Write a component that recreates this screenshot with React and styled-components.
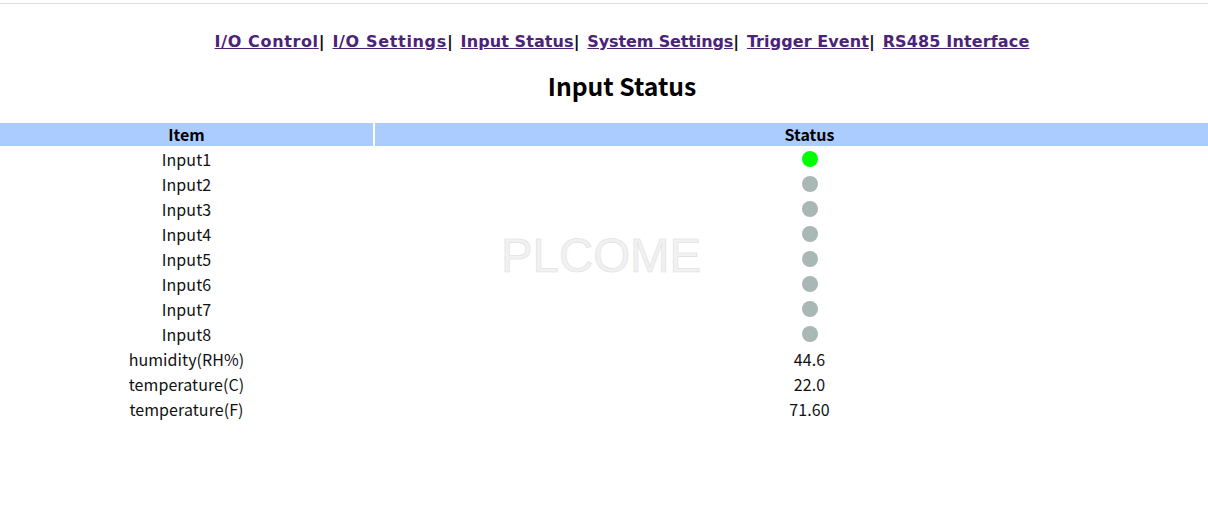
import React from "react";
import styled, { createGlobalStyle } from "styled-components";

const Global = createGlobalStyle`
  html, body { margin: 0; padding: 0; background: #fff; }
  body { font-family: "Noto Sans CJK SC", "Noto Sans", sans-serif; color: #000; }
`;

const Viewport = styled.div`
  position: relative;
  width: 1208px;
  height: 512px;
  overflow: hidden;
`;

const Page = styled.div`
  width: 1244px;
  padding-top: 3px;
`;

const TopRule = styled.hr`
  margin: 0;
  border: 0;
  height: 1px;
  background: #dedede;
`;

const Nav = styled.nav`
  margin-top: 25px;
  height: 26px;
  line-height: 26px;
  text-align: center;
  font-family: "DejaVu Sans", sans-serif;
  font-weight: 700;
  font-size: 16px;
  white-space: nowrap;
`;

const NavLink = styled.a`
  color: #4b2378;
  text-decoration: underline;
  letter-spacing: ${(p) => p.$tracking}px;
`;

const Separator = styled.span`
  margin-right: 2.3px;
  color: #111;
`;

const Title = styled.h1`
  margin: 10px 0 0;
  height: 40px;
  line-height: 40px;
  text-align: center;
  font-size: 24.7px;
  font-weight: 700;
`;

const Table = styled.div`
  margin-top: 18px;
  display: grid;
  grid-template-columns: 373px 1fr;
  column-gap: 2px;
`;

const HeadCell = styled.div`
  height: 23px;
  line-height: 22px;
  background: #aaccff;
  text-align: center;
  font-size: 16px;
  font-weight: 700;
`;

const Cell = styled.div`
  height: 25px;
  line-height: 26px;
  text-align: center;
  font-size: 16px;
  letter-spacing: 0.08px;
  color: #111;
`;

const LampCell = styled.div`
  height: 25px;
  display: flex;
  align-items: flex-start;
  justify-content: center;
  padding-top: 5px;
  box-sizing: border-box;
`;

const Lamp = styled.span`
  width: 16px;
  height: 16px;
  border-radius: 50%;
  background: ${(p) => (p.$on ? "#00ff00" : "#a9b7b5")};
`;

const Watermark = styled.div`
  position: absolute;
  left: 501px;
  top: 229px;
  font-family: "Liberation Sans", sans-serif;
  font-size: 47.4px;
  line-height: 54px;
  color: #f1f1f1;
  -webkit-text-stroke: 0.6px #dedede;
  white-space: nowrap;
  pointer-events: none;
`;

const links = [
  ["I/O Control", 0.64],
  ["I/O Settings", 0.66],
  ["Input Status", 0.09],
  ["System Settings", -0.13],
  ["Trigger Event", 0.08],
  ["RS485 Interface", 0.14],
];
const inputs = [true, false, false, false, false, false, false, false];
const readings = [
  ["humidity(RH%)", "44.6"],
  ["temperature(C)", "22.0"],
  ["temperature(F)", "71.60"],
];

export default function App() {
  return (
    <Viewport>
      <Global />
      <Page>
        <TopRule />
        <Nav>
          {links.map(([label, tracking], i) => (
            <React.Fragment key={label}>
              <NavLink href="#" $tracking={tracking}>{label}</NavLink>
              {i < links.length - 1 ? <Separator>| </Separator> : null}
            </React.Fragment>
          ))}
        </Nav>
        <Title>Input Status</Title>
        <Table>
          <HeadCell>Item</HeadCell>
          <HeadCell>Status</HeadCell>
          {inputs.map((on, i) => (
            <React.Fragment key={i}>
              <Cell>Input{i + 1}</Cell>
              <LampCell><Lamp $on={on} /></LampCell>
            </React.Fragment>
          ))}
          {readings.map(([k, v]) => (
            <React.Fragment key={k}>
              <Cell>{k}</Cell>
              <Cell>{v}</Cell>
            </React.Fragment>
          ))}
        </Table>
      </Page>
      <Watermark>PLCOME</Watermark>
    </Viewport>
  );
}
